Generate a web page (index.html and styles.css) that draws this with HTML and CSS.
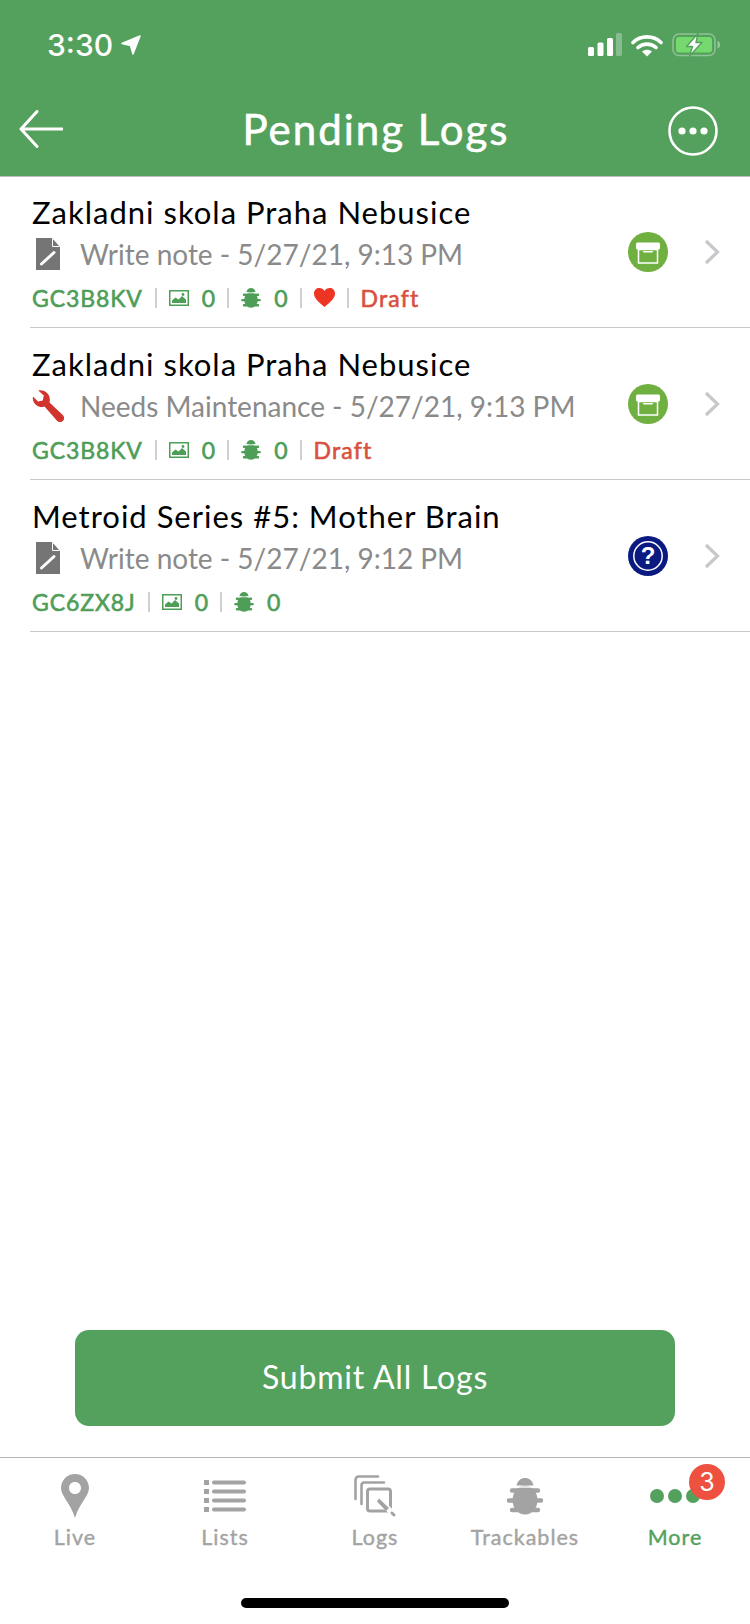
FILE: index.html
```html
<!DOCTYPE html>
<html lang="en" dir="ltr">
	<head>
		<meta charset="utf-8">
		<title>Pending Logs</title>
		<link rel="stylesheet" href="styles.css">
	</head>
	<body>
		<svg class="defs" width="0" height="0" aria-hidden="true">
			<symbol id="doc" viewBox="0 0 24 32">
				<path d="M0 0H16L24 9V32H0Z" fill="#757575"/>
				<path d="M16.5 0.5V8.500H23.500" fill="none" stroke="#fff" stroke-width="1"/>
				<path d="M5.500 26L18 14.500" stroke="#fff" stroke-width="3" stroke-linecap="round"/>
			</symbol>
			<symbol id="wrench" viewBox="0 0 32 32">
				<path d="M1 6.500C0 11 3 15.500 7.500 16.800C9.500 17.300 11 17 12.500 16.500L25 30.800C26.500 32.400 29.500 32.400 31 30.800C32.400 29.300 32.400 26.700 31 25.300L17.500 12.500C18.500 9 17.500 5 14.500 2.500C12 0.500 9 -0.200 6.300 0.500L11.800 5.500L10.800 10.500L6 11.600Z" fill="#d0342c"/>
			</symbol>
			<symbol id="photo" viewBox="0 0 20 16">
				<rect x="0.750" y="0.750" width="18.500" height="14.500" fill="none" stroke="currentColor" stroke-width="1.500"/>
				<path d="M3 13V10.500L6.500 7.500L9.500 9.500L13 6L17 9.500V13Z" fill="currentColor"/>
				<circle cx="14" cy="4.500" r="1.400" fill="currentColor"/>
			</symbol>
			<symbol id="bug" viewBox="0 0 36 37">
				<path d="M9.500 7.500C10.500 2.500 14 0 18 0C22 0 25.500 2.500 26.500 7.500Z" fill="currentColor"/>
				<ellipse cx="18" cy="22" rx="12.500" ry="14.500" fill="currentColor"/>
				<path d="M5 12.500H31M2 22.500H34M5 32H31" stroke="currentColor" stroke-width="4.400" stroke-linecap="round"/>
				<path d="M7 9H29" stroke="#fff" stroke-width="1.400"/>
			</symbol>
			<symbol id="archive" viewBox="0 0 40 40">
				<circle cx="20" cy="20" r="20" fill="#6fb040"/>
				<rect x="8" y="10.500" width="24" height="7" rx="1.500" fill="#fff"/>
				<rect x="10.500" y="17.500" width="19" height="13.500" fill="none" stroke="#fff" stroke-width="1.500"/>
				<rect x="15" y="19" width="10" height="1.500" rx="0.700" fill="#fff"/>
			</symbol>
		</svg>

		<div class="screen">
			<header class="topbar">
				<div class="status">
					<div class="status-left">
						<span class="clock">3:30</span>
						<svg width="20" height="20" viewBox="0 0 20 20"><path d="M1 8.500L19 1L12 19L9.500 10.500Z" fill="#fff" stroke="#fff" stroke-width="1.500" stroke-linejoin="round"/></svg>
					</div>
					<div class="status-right">
						<svg width="34" height="24" viewBox="0 0 34 24">
							<rect x="0" y="14" width="6" height="9" rx="1.500" fill="#fff"/>
							<rect x="9.500" y="9.500" width="6" height="13.500" rx="1.500" fill="#fff"/>
							<rect x="19" y="5" width="6" height="18" rx="1.500" fill="#fff"/>
							<rect x="28" y="0" width="6" height="23" rx="1.500" fill="#fff" opacity="0.3"/>
						</svg>
						<svg width="32" height="23" viewBox="0 0 32 23">
							<path d="M2 8.500C9.500 1 22.500 1 30 8.500M7 13.500C12 9 20 9 25 13.500" fill="none" stroke="#fff" stroke-width="3.600" stroke-linecap="round"/>
							<path d="M11 17.500C14 15 18 15 21 17.500L16 22.500Z" fill="#fff"/>
						</svg>
						<svg width="49" height="24" viewBox="0 0 49 24">
							<rect x="1" y="1" width="42" height="21.500" rx="6" fill="none" stroke="#fff" stroke-width="1.500" opacity="0.35"/>
							<path d="M45.500 8C47.500 8.500 48 10 48 11.700C48 13.500 47.500 15 45.500 15.500Z" fill="#fff" opacity="0.4"/>
							<rect x="4" y="4" width="36" height="15.500" rx="3" fill="#76d970"/>
							<path d="M26 0.500L14.500 13.500H20.500L17.500 23L30 9.500H24Z" fill="#fff" stroke="#54a15d" stroke-width="1.400" stroke-linejoin="round"/>
						</svg>
					</div>
				</div>
				<nav class="navrow">
					<div class="nav-side nav-side-left">
						<svg class="backarrow" width="44" height="38" viewBox="0 0 44 38"><path d="M43 19H2M18 1.500L2 19L18 36.500" fill="none" stroke="#fff" stroke-width="3" stroke-linecap="round" stroke-linejoin="round"/></svg>
					</div>
					<h1 class="navtitle">Pending Logs</h1>
					<div class="nav-side nav-side-right">
						<svg width="50" height="50" viewBox="0 0 50 50">
							<circle cx="25" cy="25" r="23.500" fill="none" stroke="#fff" stroke-width="2.600"/>
							<circle cx="14" cy="25" r="3.600" fill="#fff"/>
							<circle cx="25" cy="25" r="3.600" fill="#fff"/>
							<circle cx="36" cy="25" r="3.600" fill="#fff"/>
						</svg>
					</div>
				</nav>
			</header>

			<main class="loglist">
				<div class="logrow">
					<div class="logtext">
						<div class="logname">Zakladni skola Praha Nebusice</div>
						<div class="logsub">
							<svg class="logtype" width="24" height="32"><use href="#doc"/></svg>
							<span>Write note - 5/27/21, 9:13 PM</span>
						</div>
						<div class="logmeta">
							<span>GC3B8KV</span><i class="sep"></i>
							<svg width="20" height="16"><use href="#photo"/></svg><span class="count">0</span><i class="sep"></i>
							<svg width="20" height="20"><use href="#bug"/></svg><span class="count">0</span><i class="sep"></i>
							<svg width="21" height="19" viewBox="0 0 21 19"><path d="M10.500 19C4 13.500 0 10 0 5.500C0 2 2.500 0 5.300 0C7.500 0 9.500 1.200 10.500 3C11.500 1.200 13.500 0 15.700 0C18.500 0 21 2 21 5.500C21 10 17 13.500 10.500 19Z" fill="#ee3524"/></svg><i class="sep"></i>
							<span class="draft">Draft</span>
						</div>
					</div>
					<svg class="statusdot" width="40" height="40"><use href="#archive"/></svg>
					<svg class="chevron" width="16" height="26" viewBox="0 0 16 26"><path d="M2 2L13.500 13L2 24" fill="none" stroke="#c8c8cc" stroke-width="3.200"/></svg>
				</div>

				<div class="logrow">
					<div class="logtext">
						<div class="logname">Zakladni skola Praha Nebusice</div>
						<div class="logsub">
							<svg class="logtype logtype-wide" width="32" height="32"><use href="#wrench"/></svg>
							<span>Needs Maintenance - 5/27/21, 9:13 PM</span>
						</div>
						<div class="logmeta">
							<span>GC3B8KV</span><i class="sep"></i>
							<svg width="20" height="16"><use href="#photo"/></svg><span class="count">0</span><i class="sep"></i>
							<svg width="20" height="20"><use href="#bug"/></svg><span class="count">0</span><i class="sep"></i>
							<span class="draft">Draft</span>
						</div>
					</div>
					<svg class="statusdot" width="40" height="40"><use href="#archive"/></svg>
					<svg class="chevron" width="16" height="26" viewBox="0 0 16 26"><path d="M2 2L13.500 13L2 24" fill="none" stroke="#c8c8cc" stroke-width="3.200"/></svg>
				</div>

				<div class="logrow">
					<div class="logtext">
						<div class="logname">Metroid Series #5: Mother Brain</div>
						<div class="logsub">
							<svg class="logtype" width="24" height="32"><use href="#doc"/></svg>
							<span>Write note - 5/27/21, 9:12 PM</span>
						</div>
						<div class="logmeta">
							<span>GC6ZX8J</span><i class="sep"></i>
							<svg width="20" height="16"><use href="#photo"/></svg><span class="count">0</span><i class="sep"></i>
							<svg width="20" height="20"><use href="#bug"/></svg><span class="count">0</span>
						</div>
					</div>
					<svg class="statusdot" width="40" height="40" viewBox="0 0 40 40">
						<circle cx="20" cy="20" r="20" fill="#0a1a80"/>
						<circle cx="20" cy="20" r="14.200" fill="none" stroke="#fff" stroke-width="1.500"/>
						<text class="qmark" x="20" y="28" text-anchor="middle">?</text>
					</svg>
					<svg class="chevron" width="16" height="26" viewBox="0 0 16 26"><path d="M2 2L13.500 13L2 24" fill="none" stroke="#c8c8cc" stroke-width="3.200"/></svg>
				</div>
			</main>

			<div class="submitwrap">
				<button class="submit">Submit All Logs</button>
			</div>

			<footer class="tabbar">
				<div class="tabs">
					<div class="tab">
						<div class="tabicon">
							<svg width="28" height="44" viewBox="0 0 28 44"><path fill-rule="evenodd" d="M14 0C6.300 0 0 6.200 0 14C0 22 9.500 29 14 44C18.500 29 28 22 28 14C28 6.200 21.700 0 14 0ZM14 8C17.600 8 20 10.700 20 14C20 17.300 17.600 20 14 20C10.400 20 8 17.300 8 14C8 10.700 10.400 8 14 8Z" fill="#a3a3a3"/></svg>
						</div>
						<span>Live</span>
					</div>
					<div class="tab">
						<div class="tabicon">
							<svg width="42" height="32" viewBox="0 0 42 32" fill="#a3a3a3">
								<rect x="0" y="0" width="5" height="5"/><rect x="0" y="9" width="5" height="5"/><rect x="0" y="18" width="5" height="5"/><rect x="0" y="27" width="5" height="5"/>
								<rect x="8" y="0.500" width="34" height="4" rx="2"/><rect x="8" y="9.500" width="34" height="4" rx="2"/><rect x="8" y="18.500" width="34" height="4" rx="2"/><rect x="8" y="27.500" width="34" height="4" rx="2"/>
							</svg>
						</div>
						<span>Lists</span>
					</div>
					<div class="tab">
						<div class="tabicon">
							<svg width="42" height="42" viewBox="0 0 42 42" fill="none" stroke="#a3a3a3" stroke-width="2.600" stroke-linecap="round">
								<path d="M1.500 24V5C1.500 3 2.500 1.500 5 1.500H24"/>
								<path d="M7.500 29V10.500C7.500 8.500 8.500 7.500 10.500 7.500H30"/>
								<rect x="13.500" y="14" width="23" height="22" rx="2.500" stroke-width="3"/>
								<path d="M24.500 25L37 36.500" stroke-width="5.500" stroke="#fff" stroke-linecap="butt"/>
								<path d="M25 23.500L35 33L32 36L23 26.500Z" fill="#a3a3a3" stroke="none"/>
								<path d="M38 38L40 40" stroke-width="3"/>
							</svg>
						</div>
						<span>Logs</span>
					</div>
					<div class="tab">
						<div class="tabicon">
							<svg width="36" height="37"><use href="#bug"/></svg>
						</div>
						<span>Trackables</span>
					</div>
					<div class="tab tab-on">
						<div class="tabicon">
							<div class="moredots"><i></i><i></i><i></i><b class="badge">3</b></div>
						</div>
						<span>More</span>
					</div>
				</div>
				<div class="homebar"></div>
			</footer>
		</div>
	</body>
</html>
```

FILE: styles.css
```css
* {
	box-sizing: border-box;
}

body {
	margin: 0;
	font-family: "Lato", sans-serif;
	background: #fff;
}

.defs {
	position: absolute;
}

.screen {
	display: flex;
	flex-direction: column;
	width: 750px;
	height: 1624px;
	overflow: hidden;
}

/* top */
.topbar {
	position: relative;
	height: 177px;
	margin-bottom: -1px;
	background: #54a15d;
	border-bottom: 1px solid #bdbdbd;
	color: #fff;
}

.status {
	display: flex;
	justify-content: space-between;
	align-items: center;
	height: 44px;
	margin-top: 23px;
	padding: 0 29px 0 47px;
}

.status-left {
	display: flex;
	align-items: center;
	gap: 8px;
}

.clock {
	font-family: "Inter", sans-serif;
	font-size: 30px;
	font-weight: 500;
}

.status-right {
	display: flex;
	align-items: center;
	gap: 9px;
}

.navrow {
	display: flex;
	align-items: center;
	height: 86px;
	margin-top: 21px;
	padding: 0 32px 0 19px;
}

.nav-side {
	display: flex;
	width: 60px;
}

.nav-side-left {
	width: 75px;
}

.nav-side-right {
	justify-content: flex-end;
}

.backarrow {
	margin-bottom: 4px;
}

.navtitle {
	flex: 1;
	margin: 0 0 4px;
	font-size: 42px;
	font-weight: 400;
	letter-spacing: 2px;
	text-align: center;
	-webkit-text-stroke: 0.6px #fff;
}

/* log rows */
.loglist {
	flex: 1;
}

.logrow {
	display: flex;
	align-items: center;
	height: 152px;
	margin-left: 30px;
	padding-right: 30px;
	border-bottom: 1px solid #c8c8c8;
}

.logtext {
	flex: 1;
	align-self: flex-start;
	min-width: 0;
	padding-top: 16px;
}

.logname {
	margin-left: 2px;
	font-size: 31px;
	letter-spacing: 1px;
	line-height: 40px;
	color: #000;
}

.logsub {
	display: flex;
	align-items: center;
	height: 43px;
	font-size: 28px;
	color: #8a8a8a;
}

.logtype {
	margin: 0 20px 0 6px;
}

.logtype-wide {
	margin: 0 16px 0 2px;
}

.logmeta {
	display: flex;
	align-items: center;
	height: 45px;
	margin-left: 2px;
	font-size: 23px;
	letter-spacing: 0.9px;
	color: #4f9e58;
	-webkit-text-stroke: 0.6px currentColor;
}

.logmeta svg {
	color: #4f9e58;
}

.sep {
	width: 2px;
	height: 20px;
	margin: 0 12px;
	background: #d0d0d0;
}

.count {
	margin-left: 13px;
	letter-spacing: 0;
}

.draft {
	letter-spacing: 1.200px;
	color: #d9503f;
}

.statusdot {
	margin-right: 36px;
}

.qmark {
	font-family: "Liberation Sans", sans-serif;
	font-size: 24px;
	font-weight: 700;
	fill: #fff;
}

/* button */
.submitwrap {
	padding: 0 75px 31px;
}

.submit {
	display: block;
	width: 100%;
	height: 96px;
	padding-bottom: 4px;
	border: 0;
	border-radius: 14px;
	background: #54a15d;
	color: #fff;
	font-family: inherit;
	font-size: 32px;
	letter-spacing: 0.8px;
}

/* bottom tabs */
.tabbar {
	height: 167px;
	border-top: 1px solid #b5b5b5;
}

.tabs {
	display: flex;
}

.tab {
	display: flex;
	flex-direction: column;
	align-items: center;
	width: 150px;
	height: 92px;
	padding-top: 10px;
	color: #a3a3a3;
	font-size: 21.500px;
	letter-spacing: 1px;
	-webkit-text-stroke: 0.4px currentColor;
}

.tabicon {
	display: flex;
	align-items: center;
	justify-content: center;
	height: 56px;
}

.tab-on {
	color: #54a15d;
}

.moredots {
	position: relative;
	display: flex;
	gap: 4px;
}

.moredots i {
	width: 14px;
	height: 14px;
	border-radius: 50%;
	background: #54a15d;
}

.badge {
	position: absolute;
	top: -25px;
	left: 39px;
	width: 36px;
	height: 36px;
	border-radius: 50%;
	background: #ee5140;
	color: #fff;
	font-family: "Inter", sans-serif;
	font-size: 25px;
	font-weight: 400;
	line-height: 36px;
	letter-spacing: 0;
	text-align: center;
	-webkit-text-stroke: 0;
}

.homebar {
	width: 268px;
	height: 10px;
	margin: 48px auto 0;
	border-radius: 5px;
	background: #000;
}
```
